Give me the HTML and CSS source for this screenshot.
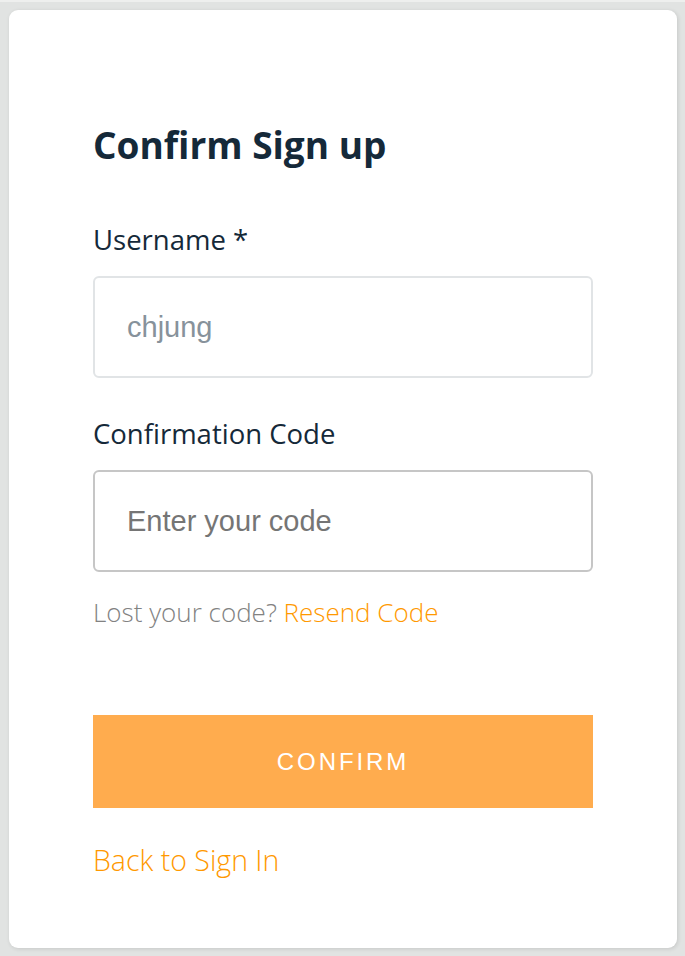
FILE: index.html
```html
<!DOCTYPE html>
<html>
<head>
<meta charset="utf-8">
<link rel="stylesheet" href="styles.css">
</head>
<body>
<div class="card">
  <h1 class="title">Confirm Sign up</h1>
  <div class="field">
    <label class="label">Username *</label>
    <div class="input input-disabled">chjung</div>
  </div>
  <div class="field">
    <label class="label">Confirmation Code</label>
    <div class="input input-active">Enter your code</div>
  </div>
  <p class="hint">Lost your code? <a class="link">Resend Code</a></p>
  <button class="button">CONFIRM</button>
  <p class="back"><a class="link">Back to Sign In</a></p>
</div>
</body>
</html>
```
FILE: styles.css
```css
html, body {
  margin: 0;
  padding: 0;
}
body {
  background: #e1e3e2;
  border-top: 2px solid #eeefee;
  width: 685px;
  height: 954px;
  overflow: hidden;
  font-family: "Open Sans", "Liberation Sans", sans-serif;
}
.card {
  box-sizing: border-box;
  margin: 8px 8px 0 9px;
  width: 668px;
  height: 938px;
  background: #fff;
  border-radius: 9px;
  box-shadow: 1px 1px 4px rgba(0,0,0,0.12);
  padding: 113px 84px 0 84px;
}
.title {
  margin: 0;
  font-size: 37px;
  font-weight: 700;
  line-height: 44px;
  color: #152939;
}
.field {
  margin-top: 57px;
}
.field + .field {
  margin-top: 40px;
}
.label {
  display: block;
  font-size: 27.5px;
  line-height: 32px;
  color: #152939;
  margin-bottom: 20px;
}
.input {
  box-sizing: border-box;
  height: 102px;
  border-radius: 6px;
  padding: 0 32px;
  display: flex;
  align-items: center;
  font-family: "Liberation Sans", Arial, sans-serif;
  font-size: 29px;
}
.input-disabled {
  border: 2px solid #e1e4e6;
  color: #87929b;
}
.input-active {
  border: 2px solid #c6c6c6;
  color: #757575;
}
.hint {
  margin: 24px 0 0 0;
  font-size: 26px;
  font-weight: 300;
  line-height: 32px;
  color: #828282;
}
.link {
  color: #ff9900;
}
.button {
  display: block;
  margin-top: 87px;
  width: 500px;
  height: 93px;
  border: none;
  background: #ffac4e;
  color: #fff;
  font-family: "Liberation Sans", Arial, sans-serif;
  font-size: 24px;
  letter-spacing: 2.9px;
  padding: 0;
}
.back {
  margin: 36px 0 0 0;
  font-size: 28.5px;
  font-weight: 300;
  line-height: 32px;
}
```
